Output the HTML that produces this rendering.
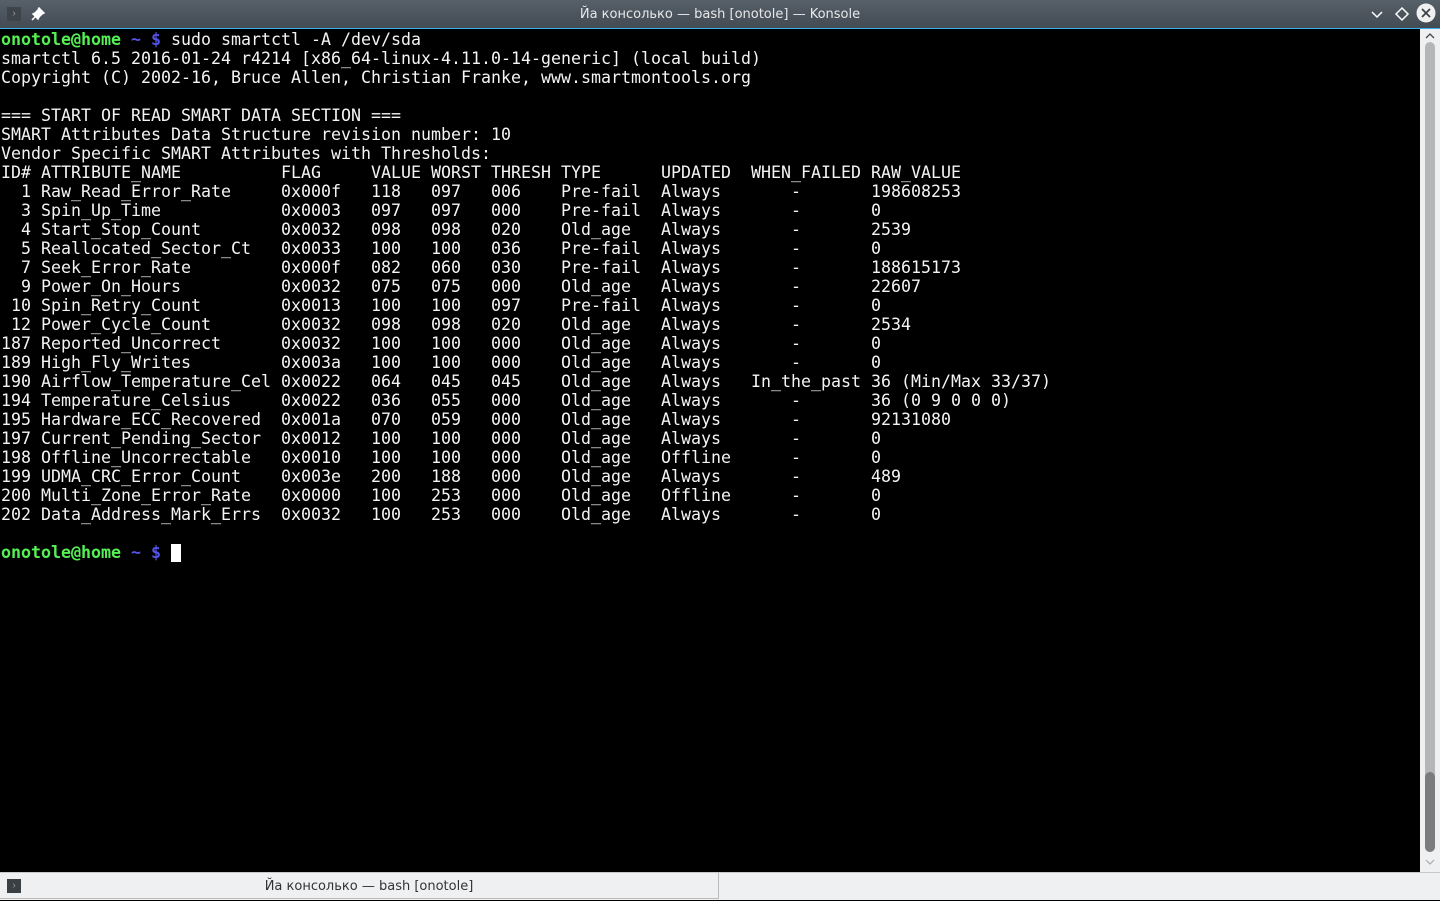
<!DOCTYPE html>
<html><head><meta charset="utf-8"><style>
html,body{margin:0;padding:0;width:1440px;height:900px;overflow:hidden;background:#000;}
#title{position:absolute;left:0;top:0;width:1440px;height:28px;background:linear-gradient(#566069,#434b53);}
#title .t{position:absolute;left:0;width:1440px;top:7px;text-align:center;color:#e6e8ea;font:13px "DejaVu Sans","Liberation Sans",sans-serif;}
#blue{position:absolute;left:0;top:28px;width:1440px;height:1px;background:#3daee9;}
#term{position:absolute;left:1px;top:30px;margin:0;color:#f4f4f4;font:16.62px/19px "DejaVu Sans Mono","Liberation Mono",monospace;white-space:pre;}
.g{color:#54f054;font-weight:bold}.b{color:#5454e8;font-weight:bold}
.cur{display:inline-block;width:10px;height:18px;background:#fff;vertical-align:-4px;}
#sb{position:absolute;left:1420px;top:29px;width:20px;height:843px;background:#eff0f1;}
#track{position:absolute;left:5px;top:13px;width:10px;height:810px;border-radius:5px;background:#b5b6b8;}
#thumb{position:absolute;left:5px;top:743px;width:10px;height:80px;border-radius:5px;background:#7b7c7e;}
#bot{position:absolute;left:0;top:872px;width:1440px;height:28px;background:#eff0f1;border-top:1px solid #c8c9cb;box-sizing:border-box;}
#tab{position:absolute;left:0;top:0;width:719px;height:26px;border-right:1px solid #bbb;border-bottom:1px solid #bbb;color:#333;font:13px "DejaVu Sans","Liberation Sans",sans-serif;text-align:center;line-height:28px;padding-left:20px;box-sizing:border-box;}
.ico{position:absolute;width:14px;height:14px;background:#3a3f44;color:#999;font:10px sans-serif;line-height:14px;text-align:center;}
</style></head><body>
<div id="title"><div class="ico" style="left:7px;top:7px;background:#3d444a">›</div>
<svg style="position:absolute;left:31px;top:7px" width="14" height="14" viewBox="0 0 14 14"><path d="M8 1l5 5-2 1-3 3-1 2-5-5 2-1 3-3z M4 10l-3 3" stroke="#fff" stroke-width="1.5" fill="#fff"/></svg>
<div class="t">Йа консолько — bash [onotole] — Konsole</div>
<svg style="position:absolute;left:1370px;top:9px" width="14" height="12"><path d="M2 3l5 5 5-5" stroke="#fff" stroke-width="1.5" fill="none"/></svg>
<svg style="position:absolute;left:1394px;top:6px" width="16" height="16"><path d="M8 2l6 6-6 6-6-6z" stroke="#fff" stroke-width="1.5" fill="none"/></svg>
<svg style="position:absolute;left:1416px;top:3px" width="20" height="20"><circle cx="10" cy="10" r="9.5" fill="#f0f0f0"/><path d="M6 6l8 8M14 6l-8 8" stroke="#3a3f44" stroke-width="1.7"/></svg>
</div>
<div id="blue"></div>
<pre id="term"><span class="g">onotole@home</span> <span class="b">~ $</span> sudo smartctl -A /dev/sda
smartctl 6.5 2016-01-24 r4214 [x86_64-linux-4.11.0-14-generic] (local build)
Copyright (C) 2002-16, Bruce Allen, Christian Franke, www.smartmontools.org

=== START OF READ SMART DATA SECTION ===
SMART Attributes Data Structure revision number: 10
Vendor Specific SMART Attributes with Thresholds:
ID# ATTRIBUTE_NAME          FLAG     VALUE WORST THRESH TYPE      UPDATED  WHEN_FAILED RAW_VALUE
  1 Raw_Read_Error_Rate     0x000f   118   097   006    Pre-fail  Always       -       198608253
  3 Spin_Up_Time            0x0003   097   097   000    Pre-fail  Always       -       0
  4 Start_Stop_Count        0x0032   098   098   020    Old_age   Always       -       2539
  5 Reallocated_Sector_Ct   0x0033   100   100   036    Pre-fail  Always       -       0
  7 Seek_Error_Rate         0x000f   082   060   030    Pre-fail  Always       -       188615173
  9 Power_On_Hours          0x0032   075   075   000    Old_age   Always       -       22607
 10 Spin_Retry_Count        0x0013   100   100   097    Pre-fail  Always       -       0
 12 Power_Cycle_Count       0x0032   098   098   020    Old_age   Always       -       2534
187 Reported_Uncorrect      0x0032   100   100   000    Old_age   Always       -       0
189 High_Fly_Writes         0x003a   100   100   000    Old_age   Always       -       0
190 Airflow_Temperature_Cel 0x0022   064   045   045    Old_age   Always   In_the_past 36 (Min/Max 33/37)
194 Temperature_Celsius     0x0022   036   055   000    Old_age   Always       -       36 (0 9 0 0 0)
195 Hardware_ECC_Recovered  0x001a   070   059   000    Old_age   Always       -       92131080
197 Current_Pending_Sector  0x0012   100   100   000    Old_age   Always       -       0
198 Offline_Uncorrectable   0x0010   100   100   000    Old_age   Offline      -       0
199 UDMA_CRC_Error_Count    0x003e   200   188   000    Old_age   Always       -       489
200 Multi_Zone_Error_Rate   0x0000   100   253   000    Old_age   Offline      -       0
202 Data_Address_Mark_Errs  0x0032   100   253   000    Old_age   Always       -       0

<span class="g">onotole@home</span> <span class="b">~ $</span> <span class="cur"></span></pre>
<div id="sb"><svg style="position:absolute;left:4px;top:3px" width="12" height="8"><path d="M2 6l4-4 4 4" stroke="#444" stroke-width="1.3" fill="none"/></svg><div id="track"></div><div id="thumb"></div><svg style="position:absolute;left:4px;top:829px" width="12" height="8"><path d="M2 2l4 4 4-4" stroke="#aaa" stroke-width="1.2" fill="none"/></svg></div>
<div id="bot"><div id="tab"><div class="ico" style="left:7px;top:6px">›</div>Йа консолько — bash [onotole]</div></div>
</body></html>
